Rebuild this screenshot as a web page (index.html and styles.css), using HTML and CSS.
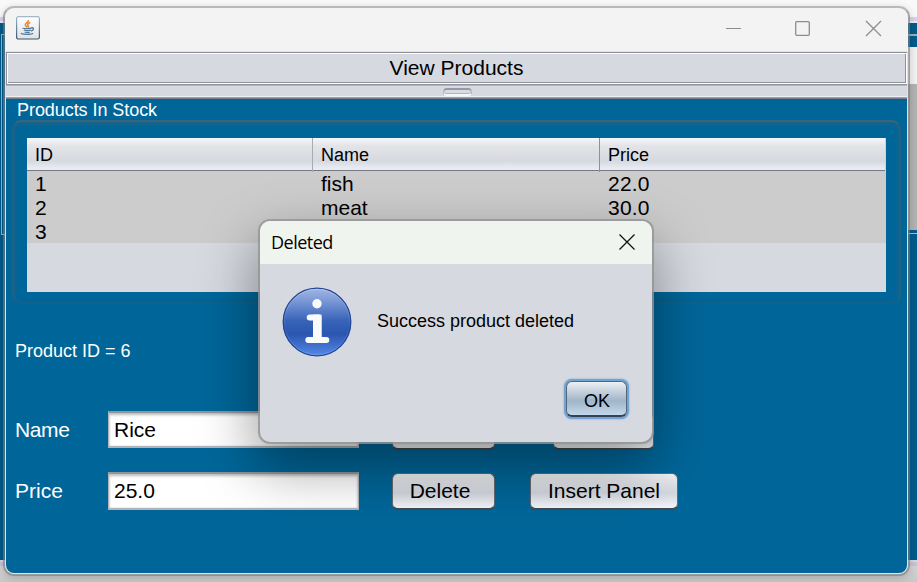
FILE: index.html
```html
<!DOCTYPE html>
<html lang="en">
<head>
<meta charset="utf-8">
<title>Products</title>
<link rel="stylesheet" href="styles.css">
</head>
<body>
<div class="backdrop">
  <div class="back-top"></div>
  <div class="back-body">
    <div class="back-left"></div>
    <div class="back-right"><div class="back-head"></div><div class="back-table"></div></div>
  </div>
  <div class="back-bottom"></div>
</div>

<main class="window">
  <header class="titlebar">
    <svg class="java" width="24" height="24" viewBox="0 0 24 24" fill="none">
      <defs>
        <linearGradient id="jb" x1="0" y1="0" x2="0" y2="1"><stop stop-color="#a3b8c9"/><stop offset="1" stop-color="#39566d"/></linearGradient>
        <linearGradient id="jf" x1="0" y1="0" x2="0" y2="1"><stop stop-color="#fff"/><stop offset="1" stop-color="#dfe2e5"/></linearGradient>
      </defs>
      <rect x=".6" y=".6" width="22.8" height="22.4" rx="1.8" fill="url(#jf)" stroke="url(#jb)" stroke-width="1.2"/>
      <path d="M12.3 4.2c1 2-3.600 2.900-3 5 .2.900 1.400 1.300 1.900 2.200M14.300 6.500c-2 .8-3.200 1.800-2.300 3 .6.700.6 1.200 0 1.900" stroke="#e88a35" stroke-width="1.600"/>
      <path d="M7.200 12c-1.500.8 6.800 1 8.500-.1M7.900 14c1.500.7 5.200.7 7 0M8.600 16c1.500.7 4 .7 5.400 0M15.500 11.900c2.800-.9 2.500 2.500-.4 3.100M5.600 17c-2.300 1.400 10 2 11.300.1" stroke="#547c9d" stroke-width="1.300"/>
    </svg>
    <svg class="controls" width="157" height="18" viewBox="0 0 157 18" fill="none" stroke="#8d8d8d">
      <path d="M0 9.500h15" stroke-width="1"/>
      <rect x="69.700" y="2.700" width="13.600" height="13.600" rx="1" stroke-width="1.300"/>
      <path d="M140 2l15 15M155 2l-15 15" stroke-width="1.300"/>
    </svg>
  </header>
  <div class="client">
    <h1 class="heading"><span>View Products</span></h1>
    <div class="splitter"><i class="grip"></i></div>
    <section class="panel">
      <h2 class="stock-title">Products In Stock</h2>
      <div class="stock-frame">
        <div class="table">
          <div class="row head"><span>ID</span><span>Name</span><span>Price</span></div>
          <div class="row"><span>1</span><span>fish</span><span>22.0</span></div>
          <div class="row"><span>2</span><span>meat</span><span>30.0</span></div>
          <div class="row"><span>3</span><span></span><span></span></div>
        </div>
      </div>
      <p class="product-id">Product ID = 6</p>
      <div class="field-row first">
        <label class="label name">Name</label><div class="field">Rice</div>
        <div class="button small"></div><div class="button second"></div>
      </div>
      <div class="field-row">
        <label class="label">Price</label><div class="field">25.0</div>
        <div class="button small">Delete</div><div class="button insert">Insert Panel</div>
      </div>
    </section>
  </div>
  <div class="shade"></div>
</main>

<div class="dialog">
  <header class="dialog-title">
    <span>Deleted</span>
    <svg width="16" height="16" viewBox="0 0 16 16" stroke="#111" stroke-width="1.250"><path d="M.5.5l15 15M15.500.5l-15 15"/></svg>
  </header>
  <div class="message">
    <svg class="info" width="70" height="70" viewBox="0 0 70 70">
      <defs><linearGradient id="blue" x1="0" y1="0" x2="0" y2="1"><stop stop-color="#9fb4e4"/><stop offset=".15" stop-color="#839fda"/><stop offset=".48" stop-color="#3863b9"/><stop offset=".68" stop-color="#2b56b0"/><stop offset="1" stop-color="#5488e6"/></linearGradient>
      <linearGradient id="rim" x1="0" y1="0" x2="0" y2="1"><stop stop-color="#b1c3ec"/><stop offset=".6" stop-color="#315cb6"/><stop offset="1" stop-color="#6798ef"/></linearGradient></defs>
      <circle cx="35" cy="35" r="33.800" fill="url(#blue)" stroke="#224494" stroke-width="1.300"/>
      <circle cx="35" cy="35" r="32.600" fill="none" stroke="url(#rim)" stroke-width="1"/>
      <circle cx="35" cy="16.800" r="4.700" fill="#fafafa"/>
      <path d="M27.700 30.500h8.800v22.500M26.300 53h18" fill="none" stroke="#fafafa" stroke-width="6" stroke-linecap="round"/>
      <path d="M31 27.500h5.500a3 3 0 0 1 3 3V53H31z" fill="#fafafa"/>
    </svg>
    <span>Success product deleted</span>
  </div>
  <div class="actions"><div class="ok">OK</div></div>
</div>
</body>
</html>
```

FILE: styles.css
```css
* { box-sizing: border-box; }
body {
  margin: 0;
  width: 917px;
  height: 582px;
  overflow: hidden;
  position: relative;
  font-family: "Liberation Sans", sans-serif;
  font-size: 21px;
  color: #000;
}
.backdrop { height: 582px; display: flex; flex-direction: column; }
.back-top {
  height: 23px;
  background: linear-gradient(#f9f9f9 0 17px, #d5d3ee 17px 21px, #eee 21px);
}
.back-body {
  height: 537px;
  display: flex;
  justify-content: space-between;
  background: #005c8c;
}
.back-left {
  width: 8px;
  height: 201px;
  margin: 11px 0 0 1px;
  border: solid #a4b3bb;
  border-width: 1px 0 1px 1px;
}
.back-right { width: 12px; padding-top: 11px; }
.back-head {
  height: 50px;
  border-top: 2px solid #9fb0b9;
  background: linear-gradient(#005c8c 0 11px, #f3f3f3 11px);
}
.back-table {
  height: 150px;
  background: linear-gradient(#b3b3b3 0 146px, #005c8c 146px 149px, #b9c0c4 149px);
}
.back-bottom {
  flex: 1;
  background: linear-gradient(#d9d9d9 0 2px, #c4c4df 2px 6px, #d4d4d4 6px, #c8c8c8);
}

.window {
  position: absolute;
  left: 3px;
  top: 6px;
  width: 907px;
  height: 570px;
  border: 2px solid rgba(125, 125, 125, .62);
  border-top-color: #b9b9b9;
  border-radius: 11px;
  background: #f3f3f3;
  background-clip: padding-box;
  box-shadow: 0 2px 9px rgba(0, 0, 0, .18);
  overflow: hidden;
}
.titlebar {
  height: 43px;
  padding: 8px 25px 0 11px;
  display: flex;
  justify-content: space-between;
}
.controls { margin-top: 3px; }
.client {
  height: 523px;
  display: flex;
  flex-direction: column;
  border: 1px solid #dce4ea;
  border-radius: 0 0 9px 9px;
  overflow: hidden;
}
.heading {
  height: 32px;
  margin: 0;
  flex: none;
  background: #fff;
  border: 1px solid #8f929a;
  border-width: 1px 0 0 1px;
  font: inherit;
  line-height: 28px;
  text-align: center;
}
.heading span {
  display: block;
  height: 29px;
  margin: 1px 1px 0;
  background: #d6d9e0;
  border: solid #8f929a;
  border-width: 0 1px 1px 0;
}
.splitter {
  height: 15px;
  flex: none;
  padding: 4px 0 0 1px;
  display: flex;
  justify-content: center;
  background: linear-gradient(#8f929a 0 1px, #b3b6be 1px 2px, #d6d9e0 2px 12px, #eceef2 12px 13px, #9c9fa9 13px 14px, #777d8b 14px);
}
.grip {
  width: 29px;
  height: 8px;
  border: 1px solid #b4b7c0;
  border-bottom: 2px solid #f6f7f9;
  border-top: 2px solid #9699a3;
  border-radius: 4px;
  background: #d9dce3;
  box-shadow: inset 0 -1px #b3b6be;
}
.panel { flex: 1; background: #006699; }
.stock-title {
  margin: 0;
  padding-left: 11px;
  height: 21px;
  color: #fff;
  font-size: 18px;
  font-weight: 400;
  line-height: 22px;
  letter-spacing: -.06px;
}
.stock-frame {
  width: 889px;
  height: 184px;
  margin-left: 6px;
  padding: 16px 14px 0 13px;
  border: 2px solid #1d6385;
  border-top-color: #36657d;
  border-bottom-color: #0f628f;
  border-radius: 9px;
  box-shadow: inset 0 2px 4px rgba(58, 98, 120, .5), inset 0 0 3px rgba(58, 98, 120, .4);
}
.table { width: 859px; height: 154px; background: #d6d9e0; }
.row {
  height: 24px;
  display: grid;
  grid-template-columns: 286px 287px 286px;
  background: #ccc;
  line-height: 26px;
}
.row span { padding-left: 8px; }
.row span:last-child { letter-spacing: .2px; }
.head {
  height: 33px;
  font-size: 18px;
  line-height: 34px;
  background: linear-gradient(#f7f7f8, #e2e4e8 25%, #d6d9e0 72%, #e8ebf2 94%, #e8ebf2);
  border-bottom: 1px solid #767984;
}
.head span { border-right: 1px solid #a9abb3; }
.head span + span { border-color: #8f929a; }
.head span:last-child { border-color: #d0d3da; letter-spacing: 0; }
.product-id {
  margin: 37px 0 0 9px;
  height: 20px;
  color: #fff;
  font-size: 18px;
  line-height: 20px;
}
.field-row { display: flex; align-items: center; height: 38px; padding-left: 9px; }
.field-row.first { margin: 49px 0 24px; }
.label { width: 93px; color: #fff; }
.name { padding-top: 2px; letter-spacing: -.4px; }
.field {
  width: 251px;
  height: 38px;
  padding-left: 5px;
  border: 1px solid #aeb4b9;
  border-top: 2px solid #8f959b;
  border-bottom-width: 2px;
  background: #fff;
  box-shadow: inset 0 2px 3px #bbb, inset 0 0 2px #ccc;
  line-height: 34px;
}
.first .field { height: 37px; }
.button {
  width: 103px;
  height: 37px;
  border: 1px solid #676b72;
  border-bottom: 2px solid #424950;
  border-radius: 6px;
  background: linear-gradient(#f4f5f7, #e4e6eb 25%, #d3d7df 55%, #f4f6fa);
  line-height: 34px;
  text-align: center;
}
.small { margin-left: 33px; padding-right: 7px; }
.second { width: 101px; margin-left: 58px; }
.first .button { margin-top: 4px; }
.insert { width: 148px; margin-left: 35px; }
.shade {
  position: absolute;
  left: 260px;
  top: 226px;
  width: 380px;
  height: 208px;
  border-radius: 10px;
  box-shadow: 0 16px 54px 12px rgba(0, 0, 0, .36);
}

.dialog {
  position: absolute;
  left: 258px;
  top: 219px;
  width: 396px;
  height: 225px;
  border: 2px solid rgba(148, 148, 148, .8);
  border-radius: 12px;
  background: #d6d9e0;
  background-clip: padding-box;
  overflow: hidden;
}
.dialog-title {
  height: 43px;
  padding: 0 17px 2px 11px;
  display: flex;
  align-items: center;
  justify-content: space-between;
  background: #f0f4ee;
  font: 18px "Open Sans", sans-serif;
  letter-spacing: -.5px;
}
.message {
  padding: 23px 0 0 22px;
  display: flex;
  align-items: center;
  gap: 25px;
  font-size: 18px;
}
.message span { padding-bottom: 1px; }
.actions { display: flex; justify-content: flex-end; padding: 24px 25px 0 0; }
.ok {
  width: 61px;
  height: 36px;
  padding-left: 1px;
  border: 1px solid #53657b;
  border-bottom: 2px solid #344255;
  border-radius: 6px;
  background: linear-gradient(#edf1f5, #c4d0dc 30%, #a1b5c9 57%, #c4d8ea);
  box-shadow: 0 0 0 2px #73a4d1, 0 0 2px 2px #73a4d1;
  font-size: 18px;
  line-height: 38px;
  text-align: center;
}
```
